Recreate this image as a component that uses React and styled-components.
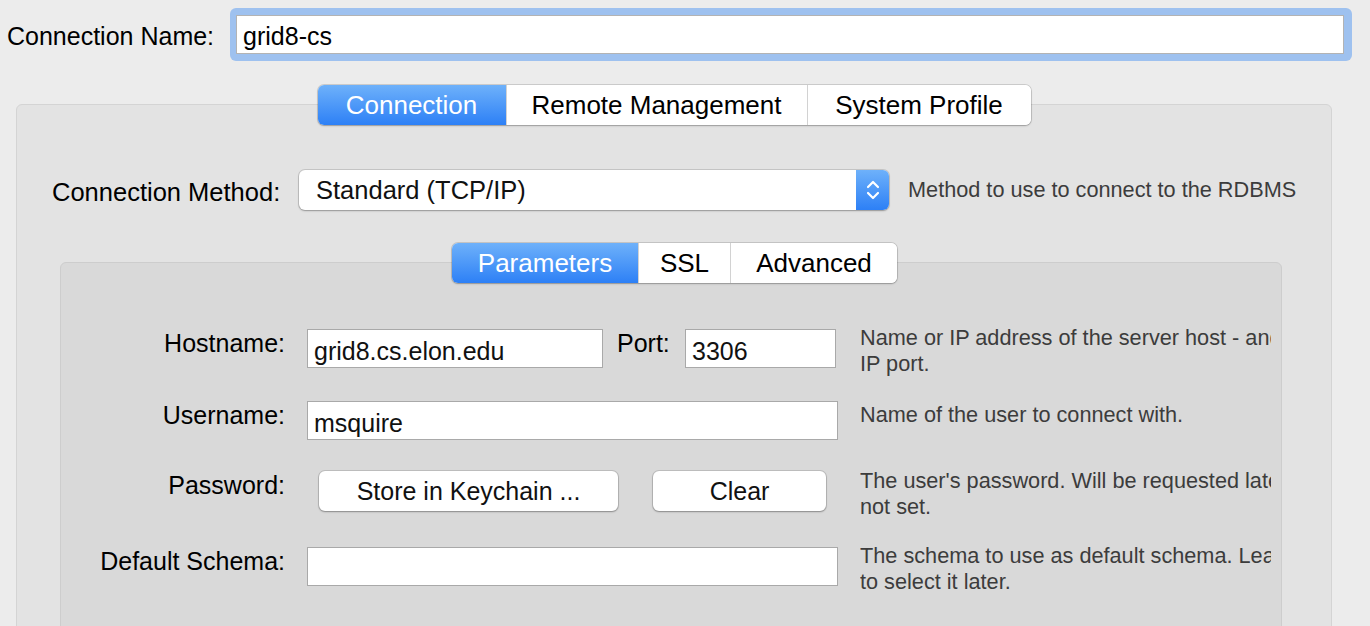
import styled, { createGlobalStyle } from 'styled-components';

const GlobalStyle = createGlobalStyle`
  html, body {
    margin: 0;
    height: 626px;
    overflow: hidden;
    background: #ececec;
  }
  body {
    font-family: "Liberation Sans", Arial, sans-serif;
    color: #000;
  }
`;

const Chevrons = () => (
  <svg width="16" height="24" viewBox="0 0 16 24" fill="none" stroke="#fff" strokeWidth="2.2" strokeLinecap="round" strokeLinejoin="round">
    <path d="M3 9 L8 4 L13 9" />
    <path d="M3 15 L8 20 L13 15" />
  </svg>
);

const SegmentedTabs = ({ tabs, active }) => (
  <TabBar>
    <Segments>
      {tabs.map((tab) => (
        <Segment key={tab.label} $width={tab.width} $active={tab.label === active}>
          {tab.label}
        </Segment>
      ))}
    </Segments>
  </TabBar>
);

const Hint = ({ lines, offset = -4 }) => (
  <HintBlock $offset={offset}>
    {lines.map((line) => (
      <HintLine key={line}>{line}</HintLine>
    ))}
  </HintBlock>
);

const App = () => {
  return (
    <>
      <GlobalStyle />
      <NameRow>
        <NameLabel>Connection Name:</NameLabel>
        <FocusRing>
          <NameField>grid8-cs</NameField>
        </FocusRing>
      </NameRow>

      <GroupBox>
        <SegmentedTabs
          active="Connection"
          tabs={[
            { label: 'Connection', width: 188 },
            { label: 'Remote Management', width: 300 },
            { label: 'System Profile', width: 223 },
          ]}
        />

        <MethodRow>
          <Label>Connection Method:</Label>
          <Select>
            <SelectText>Standard (TCP/IP)</SelectText>
            <Stepper>
              <Chevrons />
            </Stepper>
          </Select>
          <MethodHint>Method to use to connect to the RDBMS</MethodHint>
        </MethodRow>

        <InnerBox>
          <SegmentedTabs
            active="Parameters"
            tabs={[
              { label: 'Parameters', width: 186 },
              { label: 'SSL', width: 91 },
              { label: 'Advanced', width: 166 },
            ]}
          />

          <Form>
            <Row $height={72}>
              <RowLabel>Hostname:</RowLabel>
              <Fields>
                <Field $width={296}>grid8.cs.elon.edu</Field>
                <PortLabel>Port:</PortLabel>
                <Field $width={151}>3306</Field>
              </Fields>
              <Hint lines={['Name or IP address of the server host - and TCP/', 'IP port.']} />
            </Row>
            <Row $height={70}>
              <RowLabel>Username:</RowLabel>
              <Fields>
                <Field $width={531}>msquire</Field>
              </Fields>
              <Hint offset={1} lines={['Name of the user to connect with.']} />
            </Row>
            <Row $height={76}>
              <RowLabel>Password:</RowLabel>
              <Fields $indent={12}>
                <PushButton $width={299}>Store in Keychain ...</PushButton>
                <PushButton $width={173}>Clear</PushButton>
              </Fields>
              <Hint offset={-3} lines={["The user's password. Will be requested later if it's", 'not set.']} />
            </Row>
            <Row $height={90}>
              <RowLabel>Default Schema:</RowLabel>
              <Fields>
                <Field $width={531} />
              </Fields>
              <Hint lines={['The schema to use as default schema. Leave blank', 'to select it later.']} />
            </Row>
          </Form>
        </InnerBox>
      </GroupBox>
    </>
  );
};

const NameRow = styled.div`
  display: flex;
  align-items: center;
  padding: 8px 18px 0 7px;
`;

const NameLabel = styled.span`
  font-size: 25px;
  line-height: 30px;
  margin-top: 3px;
  margin-right: 16px;
  white-space: nowrap;
`;

const FocusRing = styled.div`
  flex: 1;
  padding: 7px 8px 7px 6px;
  background: #9ec1ef;
  border-radius: 6px;
`;

const NameField = styled.div`
  height: 37px;
  background: #fff;
  border: 1px solid #b3b3b3;
  padding: 0 6px;
  font-size: 25px;
  line-height: 41px;
`;

const GroupBox = styled.div`
  margin: 43px 38px 0 16px;
  padding-bottom: 60px;
  background: #e3e3e3;
  border: 1px solid #d4d4d4;
  border-radius: 6px;
`;

const TabBar = styled.div`
  display: flex;
  justify-content: center;
  margin-top: -20px;
`;

const Segments = styled.div`
  display: flex;
  height: 40px;
  background: #fff;
  border-radius: 6px;
  overflow: hidden;
  box-shadow: 0 0 0 1px rgba(0, 0, 0, 0.13), 0 1px 2px rgba(0, 0, 0, 0.22);
`;

const Segment = styled.div`
  width: ${(p) => p.$width}px;
  display: flex;
  align-items: center;
  justify-content: center;
  font-size: 26px;
  white-space: nowrap;
  color: ${(p) => (p.$active ? '#fff' : '#000')};
  background: ${(p) => (p.$active ? 'linear-gradient(#6eb1fa, #2d80f6)' : '#fff')};
  & + & {
    border-left: 1px solid #d2d2d2;
  }
`;

const MethodRow = styled.div`
  display: flex;
  align-items: center;
  margin-top: 45px;
  padding-left: 35px;
`;

const Label = styled.span`
  width: 229px;
  font-size: 25.5px;
  line-height: 30px;
  margin-top: 4px;
  white-space: nowrap;
`;

const Select = styled.div`
  display: flex;
  width: 590px;
  height: 40px;
  margin-left: 18px;
  background: #fff;
  border-radius: 6px;
  overflow: hidden;
  box-shadow: 0 0 0 1px rgba(0, 0, 0, 0.12), 0 1px 2px rgba(0, 0, 0, 0.25);
`;

const SelectText = styled.span`
  flex: 1;
  padding-left: 17px;
  font-size: 25.5px;
  line-height: 40px;
  color: #111;
`;

const Stepper = styled.div`
  width: 33px;
  display: flex;
  align-items: center;
  justify-content: center;
  background: linear-gradient(#6eb1fa, #2d80f6);
`;

const MethodHint = styled.span`
  margin-left: 19px;
  font-size: 21.7px;
  color: #3c3c3c;
  white-space: nowrap;
`;

const InnerBox = styled.div`
  margin: 52px 49px 0 43px;
  padding-bottom: 80px;
  background: #d9d9d9;
  border: 1px solid #cdcdcd;
  border-radius: 6px;
  & > ${TabBar} {
    padding-left: 7px;
  }
`;

const Form = styled.div`
  margin-top: 46px;
  padding-right: 10px;
`;

const Row = styled.div`
  display: grid;
  grid-template-columns: 224px 531px minmax(0, 1fr);
  column-gap: 22px;
  align-items: start;
  height: ${(p) => p.$height}px;
`;

const RowLabel = styled.span`
  text-align: right;
  font-size: 25px;
  line-height: 28px;
  white-space: nowrap;
`;

const Fields = styled.div`
  display: flex;
  align-items: flex-start;
  gap: ${(p) => (p.$indent ? 35 : 0)}px;
  padding-left: ${(p) => p.$indent || 0}px;
`;

const Field = styled.div`
  box-sizing: border-box;
  width: ${(p) => p.$width}px;
  height: 39px;
  padding: 0 6px;
  background: #fff;
  border: 1px solid #a9a9a9;
  font-size: 25px;
  line-height: 42px;
  color: #111;
`;

const PortLabel = styled.span`
  width: 55px;
  margin: 0 13px 0 14px;
  font-size: 25px;
  line-height: 28px;
`;

const PushButton = styled.div`
  width: ${(p) => p.$width}px;
  height: 40px;
  display: flex;
  align-items: center;
  justify-content: center;
  background: #fff;
  border-radius: 6px;
  box-shadow: 0 0 0 1px rgba(0, 0, 0, 0.12), 0 1px 2px rgba(0, 0, 0, 0.28);
  font-size: 25px;
  color: #111;
  white-space: nowrap;
`;

const HintBlock = styled.div`
  margin-top: ${(p) => p.$offset}px;
  overflow: hidden;
`;

const HintLine = styled.div`
  font-size: 21.7px;
  line-height: 26px;
  color: #3c3c3c;
  white-space: nowrap;
  overflow: hidden;
`;

export default App;
